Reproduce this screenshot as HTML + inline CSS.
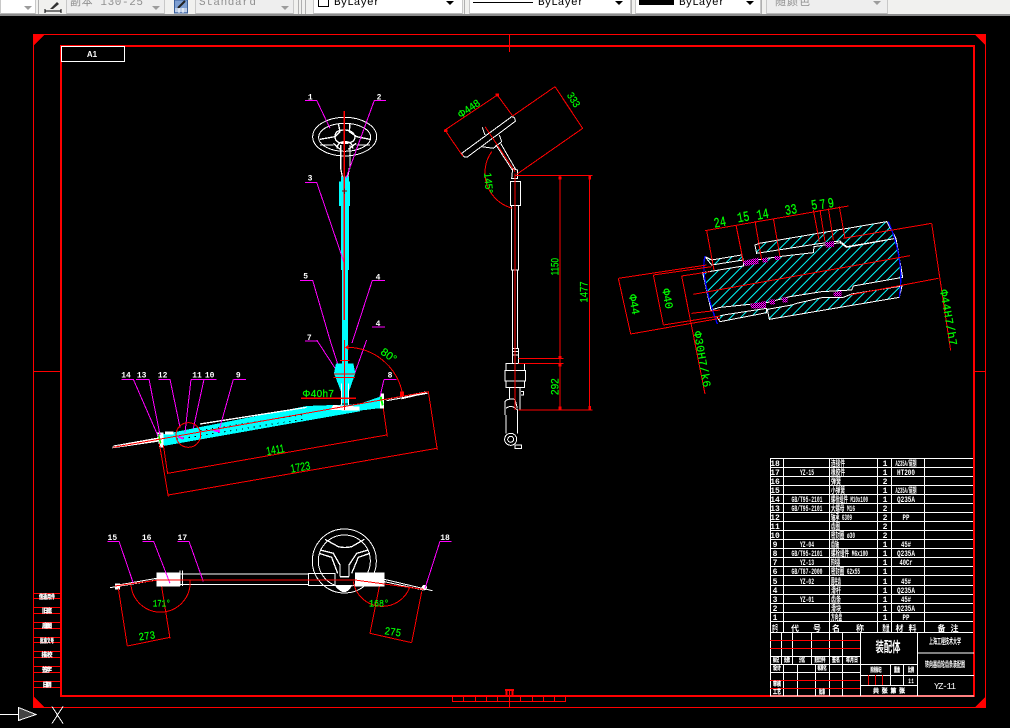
<!DOCTYPE html>
<html><head><meta charset="utf-8">
<style>
html,body{margin:0;padding:0;background:#000;width:1010px;height:728px;overflow:hidden}
#tb{position:absolute;left:0;top:0;width:1010px;height:14px;background:#f1f1ef;border-bottom:2px solid #8c8c8c;overflow:hidden}
.c{position:absolute;top:-4px;height:16px;background:#fff;border:1px solid #c8c8c8;border-bottom:2px solid #b8b8b8;box-sizing:content-box;font:11px/14px "Liberation Mono","Noto Sans CJK SC",monospace;color:#000;white-space:pre}
.d{background:#eeeeee;color:#8f8f8f}
.c span{position:absolute;top:-1px}
.a{position:absolute;top:6px;width:0;height:0;border-left:4px solid transparent;border-right:4px solid transparent;border-top:4px solid #000}
.g{border-top-color:#9c9c9c}
.s{position:absolute;top:0;width:1px;height:14px;background:#b0b0b0}
svg{position:absolute;left:0;top:0}
text{font-family:"Liberation Mono","Noto Sans CJK SC",monospace}
.w{fill:none;stroke:#fff;stroke-width:3}
.r{fill:none;stroke:#f00;stroke-width:3}
.m{fill:none;stroke:#f0f;stroke-width:3}
.gt{fill:#0f0;stroke:#0f0;stroke-width:.6;font-size:33px;font-family:"Liberation Sans",sans-serif;text-anchor:middle}
.wt{fill:#fff;font-size:24px;font-weight:bold;font-family:"Liberation Sans",sans-serif;text-anchor:middle}
.t{fill:#fff;font-size:8px;font-weight:bold;text-anchor:middle;font-family:"Liberation Sans","Noto Sans CJK SC",sans-serif}
.n{text-anchor:start}
.b{fill:#fff;stroke:#fff;stroke-width:.3;font-size:6px;font-weight:bold;text-anchor:middle;font-family:"Liberation Sans","Noto Sans CJK SC",sans-serif}
</style></head><body>
<svg width="1010" height="728" viewBox="0 0 1010 728" shape-rendering="crispEdges">
<defs>
<pattern id="h" width="21" height="21" patternUnits="userSpaceOnUse" patternTransform="rotate(-45)"><rect width="21" height="21" fill="#000"/><rect width="21" height="3" fill="#0ff"/></pattern>
<pattern id="k" width="6" height="6" patternUnits="userSpaceOnUse"><rect width="6" height="6" fill="#f0f"/><rect width="3" height="3" fill="#000"/><rect x="3" y="3" width="3" height="3" fill="#600060"/></pattern>
</defs>
<!-- frame -->
<g fill="#f00">
<rect x="33" y="34" width="953" height="1"/><rect x="33" y="707" width="953" height="1"/><rect x="33" y="34" width="1" height="674"/><rect x="985" y="34" width="1" height="674"/>
</g>
<g fill="none" stroke="#f00">
<rect x="61" y="46" width="913" height="650" stroke-width="2"/>
<path d="M509.500 34V52M509.500 690V707M33 371.500H61M974 371.500H986"/>
<path d="M452.500 696V701.500H565.500V696M463.500 697V701M475.500 697V701M486.500 697V701M497.500 697V701M509.500 697V701M520.500 697V701M532.500 697V701M543.500 697V701M554.500 697V701"/>
<path d="M505 690H514M506.500 691V697M512.500 691V697" stroke-width="2"/>
</g>
<g fill="#f00"><path d="M33 34H45L33 46ZM986 34V46L974 34ZM33 708V696L45 708ZM986 708H974L986 696Z"/></g>
<rect x="61.500" y="46.500" width="63" height="15" fill="#000" stroke="#fff"/>
<text x="92" y="57" fill="#fff" font-size="8" font-weight="bold" text-anchor="middle" style="font-family:'Liberation Sans',sans-serif">A1</text>

<!-- left strip -->
<g fill="none" stroke="#f00"><path d="M33 593.500H61M33 598.500H61M33 607.500H61M33 613.500H61M33 622.500H61M33 628.500H61M33 637.500H61M33 642.500H61M33 651.500H61M33 657.500H61M33 666.500H61M33 672.500H61M33 681.500H61M33 687.500H61"/></g>
<g class="b">
<text x="47" y="599" textLength="16" lengthAdjust="spacingAndGlyphs">借通用件</text>
<text x="47" y="613" textLength="10" lengthAdjust="spacing">旧底</text>
<text x="47" y="628" textLength="10" lengthAdjust="spacing">底图</text>
<text x="47" y="643" textLength="14" lengthAdjust="spacingAndGlyphs">批准文号</text>
<text x="47" y="657" textLength="11" lengthAdjust="spacingAndGlyphs">描校</text>
<text x="47" y="672" textLength="10" lengthAdjust="spacing">签字</text>
<text x="47" y="687" textLength="9" lengthAdjust="spacing">日期</text>
</g>

<!-- UCS -->
<g fill="none" stroke="#fff"><path d="M0 714.500H18"/><path d="M18.500 707.500L36 714.500L18.500 720.500Z" fill="#444"/><path d="M52 706.500L63 723.500M63 706.500L52 723.500"/></g>

<g>
<!-- upper main column -->
<g transform="translate(100,80) scale(.33333)">
<path fill="#0ff" d="M723 290H747V305H750V378H747V570H744V860H726V570H723V378H717V305H723Z"/>
<ellipse class="w" cx="734" cy="170" rx="96" ry="58"/>
<ellipse class="w" cx="734" cy="172" rx="78" ry="42"/>
<g class="w" style="stroke-width:4"><path d="M715 130L720 155L705 170L660 178M750 130L748 155L770 170L810 178M705 170Q705 190 733 190Q765 190 765 170Q760 150 733 150Q705 150 705 170ZM712 205Q712 185 735 185Q758 185 758 205M700 190L720 208M768 190L745 208M722 195V265M750 195V265M722 265L727 290M748 265L743 290"/><path d="M660 195L700 195M770 195L810 195"/></g>
<path class="m" d="M615 61H650L690 145M858 61H823L738 295M615 307H650L733 550M600 601H638L690 780M855 601H817L756 789M615 783H654M816 741H855"/>
<path class="r" style="stroke-width:4" d="M733 93V720"/>
<path d="M726 333H741M733 325V342" stroke="#800" stroke-width="3"/>
<g class="wt"><text x="631" y="58">1</text><text x="837" y="58">2</text><text x="630" y="301">3</text><text x="617" y="596">5</text><text x="834" y="598">4</text><text x="834" y="738">4</text><text x="628" y="780">7</text></g>
</g>
<!-- rack -->
<g transform="translate(100,340) scale(.33333)">
<path class="m" d="M650 0L712 95M690 0L722 100M800 0L750 140"/>
<path fill="#0ff" d="M726 0H744V70H760L766 100L745 160V190H725V160L702 100L708 70H726Z"/>
<path fill="#0ff" d="M190 283L620 198L780 192V214L620 242L190 318Z"/>
<path fill="#fff" d="M700 195L780 200V212L690 210Z"/>
<path fill="#0ff" d="M778 192L840 170H848V205H835L778 212Z"/>
<path d="M230 298L620 236M300 272L620 222" fill="none" stroke="#000" stroke-width="3" stroke-dasharray="4 14"/>
<path d="M300 252L620 202" fill="none" stroke="#fff" stroke-width="4"/>
<path class="w" d="M38 322L175 296M40 318L175 294M848 180L982 155M860 182L982 160M725 130V195M745 130V195"/>
<path fill="#fff" d="M170 278L190 278V322H178ZM840 160H852V205H840ZM195 275H220V284H195ZM38 320L175 298V305L38 325ZM905 172L980 156V160L905 178Z"/>
<path d="M842 170L848 196" stroke="#0f0" stroke-width="6"/><path d="M175 282L182 310" stroke="#0f0" stroke-width="5"/>
<path class="m" d="M65 118H100L175 290M108 118H147L180 285M175 118H210L240 262M273 118H312M273 118L255 278M312 118H350M312 118L280 265M400 118H438M400 118L357 272M852 118H890M852 118L840 170"/>
<path d="M235 290L250 296M340 270L360 275" stroke="#f0f" stroke-width="6"/>
<circle class="r" cx="265" cy="285" r="37"/>
<path class="r" d="M40 322L985 155M733 0V210M702 102H765M700 112H765M720 62H748"/>
<path class="r" style="stroke-width:4" d="M603 175H768"/>
<path class="r" d="M745 22A170 170 0 0 1 908 165M190 315L203 402M203 400L860 285M850 205L862 290M178 310L205 470M205 465L1010 325M985 155L1012 330"/>
<path fill="#f00" d="M745 15L735 22L745 30ZM900 155H912V168H900Z"/>
<text class="gt" transform="translate(528,341) rotate(-10)" style="font-size:35px" textLength="55" lengthAdjust="spacingAndGlyphs">1411</text>
<text class="gt" transform="translate(603,393) rotate(-10)" style="font-size:35px" textLength="60" lengthAdjust="spacingAndGlyphs">1723</text>
<text class="gt" transform="translate(860,55) rotate(35)" textLength="50" lengthAdjust="spacingAndGlyphs">80°</text>
<text class="gt" x="655" y="171" style="font-size:30px;letter-spacing:1px">Φ40h7</text>
<g class="wt"><text x="78" y="112">14</text><text x="125" y="112">13</text><text x="188" y="112">12</text><text x="291" y="112">11</text><text x="329" y="112">10</text><text x="415" y="112">9</text><text x="870" y="112">8</text></g>
</g>

<!-- side view -->
<g transform="translate(440,80) scale(.33333)">
<path class="w" d="M65 220L215 110Q226 110 226 124L82 231Q70 234 65 220Z"/>
<path class="w" d="M127 142L135 165M125 200L160 205L185 185L178 165M168 195L218 272M182 190L228 270"/>
<path class="w" d="M212 305H242V377H212ZM215 377V570H236V377M218 570V805M233 570V805M218 805H236V850H218ZM218 815H236M218 825H236M198 850H254V872H198ZM195 872H257V903H195ZM198 903H254V922H198ZM208 922V958M240 922V990M243 935H250V945H243M195 965Q200 955 225 958L232 985M195 965V1005M198 985Q215 972 232 990V1060M198 1005V1060"/>
<circle class="w" cx="212" cy="1078" r="18"/><circle class="w" cx="212" cy="1078" r="9"/>
<path class="w" d="M225 1095H245V1105H225ZM218 265L232 270V295H215Z"/>
<path class="r" d="M225 280V990M135 140L225 275"/>
<path class="r" d="M225 286H458M235 835H370M235 850H370M235 990H458M360 286V990M449 286V990M15 150L172 45M15 150L68 228M172 45L218 108M218 108L345 20M345 20L428 145M428 145L230 283M155 215A110 110 0 0 0 218 385"/>
<path fill="#f00" d="M12 148H22V156H12ZM167 40H177V50H167ZM356 290H364V298H356ZM356 828H364V835H356ZM356 852H364V860H356ZM356 980H364V990H356ZM445 288H453V298H445ZM445 978H453V990H445Z"/>
<text class="gt" transform="translate(92,95) rotate(-34)" style="font-size:31px" textLength="74" lengthAdjust="spacingAndGlyphs">Φ448</text>
<text class="gt" transform="translate(392,65) rotate(58)" style="font-size:31px" textLength="46" lengthAdjust="spacingAndGlyphs">333</text>
<text class="gt" transform="translate(135,310) rotate(85)" style="font-size:31px" textLength="62" lengthAdjust="spacingAndGlyphs">145°</text>
<text class="gt" transform="translate(355,560) rotate(-90)" textLength="52" lengthAdjust="spacingAndGlyphs">1150</text>
<text class="gt" transform="translate(443,636) rotate(-90)" textLength="63" lengthAdjust="spacingAndGlyphs">1477</text>
<text class="gt" transform="translate(355,920) rotate(-90)" textLength="50" lengthAdjust="spacingAndGlyphs">292</text>
</g>

<!-- section -->
<g transform="translate(610,190) scale(.33333)">
<path fill="url(#h)" stroke="#fff" stroke-width="3" d="M278 248L400 228V215L440 210L505 200L610 188L612 170L690 158L710 172L858 145L878 262L730 288L725 300L635 305L540 320L470 338L330 352L303 360Z"/>
<path fill="url(#h)" stroke="#fff" stroke-width="3" d="M448 160L830 95L858 145L710 170L690 153L620 162L505 180L440 190L435 165Z"/>
<path fill="url(#h)" stroke="#fff" stroke-width="3" d="M472 358L478 388L868 322L876 288L725 312L700 322L640 322L560 340L545 345Z"/>
<path fill="url(#h)" stroke="#fff" stroke-width="3" d="M285 200L305 210L395 195L400 210L305 225ZM320 380L340 375L470 355V368L330 395Z"/>
<path fill="url(#k)" d="M398 213L445 203V222L405 228ZM455 205L472 202V218H458ZM492 198H510V210H495ZM645 157L672 153V170L648 173ZM420 342L468 333V354L425 356ZM478 328H495V343H480ZM515 322H532V337H518ZM670 307L695 303V320H672Z"/>
<path d="M285 198Q270 260 322 402M835 95Q885 210 868 322" fill="none" stroke="#00f" stroke-width="4"/>
<path class="r" d="M250 313L900 197M285 122L715 48M290 122L312 240M378 105L400 215M435 93L455 210M490 85L510 200M610 60L628 155M630 60L645 155M655 55L670 150M688 50L705 145M700 145L965 100M965 100L1022 482M720 315L985 265M25 265L290 225M25 265L62 432M62 432L330 385M130 255L305 230M130 255L160 405M160 405L330 378M215 258L300 245M215 258L285 612M245 370L330 360"/>
<g class="gt"><text transform="translate(332,110) rotate(-10) scale(.9,1.25)" style="font-size:34px">24</text><text transform="translate(402,94) rotate(-10) scale(.9,1.25)" style="font-size:34px">15</text><text transform="translate(460,86) rotate(-10) scale(.9,1.25)" style="font-size:34px">14</text><text transform="translate(545,72) rotate(-10) scale(.9,1.25)" style="font-size:34px">33</text><text transform="translate(615,58) rotate(-10) scale(.9,1.25)" style="font-size:34px">5</text><text transform="translate(640,56) rotate(-10) scale(.9,1.25)" style="font-size:34px">7</text><text transform="translate(665,52) rotate(-10) scale(.9,1.25)" style="font-size:34px">9</text>
<text transform="translate(62,345) rotate(80)" style="font-size:34px">Φ44</text><text transform="translate(162,328) rotate(80)" style="font-size:34px">Φ40</text><text transform="translate(266,510) rotate(80)" style="font-size:34px;letter-spacing:1px">Φ30H7/k6</text><text transform="translate(1005,385) rotate(80)" style="font-size:34px;letter-spacing:1px">Φ44H7/h7</text></g>
</g>

<!-- bottom view -->
<g transform="translate(95,520) scale(.33333)">
<circle class="w" cx="748" cy="123" r="96"/><circle class="w" cx="748" cy="123" r="78"/>
<path class="w" style="stroke-width:4" d="M690 58L730 80Q750 85 770 80L808 58M675 90L715 100L735 135L735 170M820 90L785 100L762 135L762 170M672 100L710 112L728 160M825 100L790 112L770 160M735 170H762"/>
<path class="w" d="M255 162H640V193H255ZM640 160H720V197H640ZM255 152V198M262 152V198M720 195Q750 235 770 195M735 205Q750 222 762 205"/>
<path fill="#fff" d="M185 158H255V200H185ZM780 157H868V200H780ZM720 195H770L760 212H735ZM60 190H75V208H60Z"/>
<path class="w" d="M45 203L185 180M70 195L185 175M868 178L1012 212M868 185L985 210"/>
<circle cx="988" cy="203" r="8" fill="#fff"/>
<path class="m" d="M37 64H72L115 190M142 64H176L225 190M247 64H282L325 185M1070 64H1035L990 205"/>
<path class="r" d="M60 198L190 180H780L985 208M108 195A88 88 0 0 0 285 180M775 185A88 88 0 0 0 945 200M70 205L97 378M97 378L225 352M200 200L225 355M853 200L825 340M825 340L950 368M980 215L950 368"/>
<g class="gt"><text transform="translate(157,358) rotate(-8)" style="font-size:33px" textLength="50" lengthAdjust="spacingAndGlyphs">273</text><text transform="translate(892,346) rotate(8)" style="font-size:33px" textLength="50" lengthAdjust="spacingAndGlyphs">275</text><text x="200" y="259" style="font-size:30px" textLength="53" lengthAdjust="spacingAndGlyphs">171°</text><text x="852" y="259" style="font-size:30px" textLength="60" lengthAdjust="spacingAndGlyphs">168°</text></g>
<g class="wt"><text x="52" y="60">15</text><text x="155" y="60">16</text><text x="262" y="60">17</text><text x="1050" y="60">18</text></g>
</g>
</g>

<!-- parts table -->
<g stroke="#fff" fill="none">
<path d="M770.500 458.500H973M770.500 467.500H973M770.500 476.500H973M770.500 485.500H973M770.500 494.500H973M770.500 503.500H973M770.500 512.500H973M770.500 521.500H973M770.500 530.500H973M770.500 539.500H973M770.500 548.500H973M770.500 557.500H973M770.500 566.500H973M770.500 575.500H973M770.500 585.500H973M770.500 594.500H973M770.500 603.500H973M770.500 612.500H973M770.500 621.500H973M770.500 632.500H973"/>
<path d="M770.500 458V696M783.500 458V632M829.500 458V632M877.500 458V632M891.500 458V632M924.500 458V632"/>
<!-- title -->
<path d="M770 696H974M860.500 632V696M917.500 632V696M770 656.500H860M770 664.500H860M770 672.500H860"/>
<path d="M781.500 632V664M792.500 632V664M811.500 632V664M829.500 632V664M842.500 632V696M783.500 664V696M797.500 664V696M815.500 664V696M829.500 664V696M860 664.500H917M860 675.500H917M860 685.500H917M890.500 664V685M903.500 664V685M917 653H974M917 675.500H974"/>
</g>
<g stroke="#f00" fill="none"><path d="M770 640.500H860M770 648.500H860M770 680.500H860M770 688.500H860M868.500 675V685M875.500 675V685M882.500 675V685"/></g>
<g class="t">
<text x="775" y="466">18</text><text class="n" x="831" y="466" textLength="14" lengthAdjust="spacingAndGlyphs">连接件</text><text x="885" y="466">1</text><text x="906" y="466" textLength="21" lengthAdjust="spacingAndGlyphs">A235A/碳钢</text>
<text x="775" y="475">17</text><text x="807" y="475" textLength="14" lengthAdjust="spacingAndGlyphs">YZ-15</text><text class="n" x="831" y="475" textLength="14" lengthAdjust="spacingAndGlyphs">橡胶件</text><text x="885" y="475">1</text><text x="906" y="475" textLength="18" lengthAdjust="spacingAndGlyphs">HT200</text>
<text x="775" y="484">16</text><text class="n" x="831" y="484" textLength="10" lengthAdjust="spacingAndGlyphs">弹簧</text><text x="885" y="484">2</text>
<text x="775" y="493">15</text><text class="n" x="831" y="493" textLength="14" lengthAdjust="spacingAndGlyphs">小弹簧</text><text x="885" y="493">1</text><text x="906" y="493" textLength="21" lengthAdjust="spacingAndGlyphs">A235A/碳钢</text>
<text x="775" y="502">14</text><text x="807" y="502" textLength="31" lengthAdjust="spacingAndGlyphs">GB/T95-2101</text><text class="n" x="831" y="502" textLength="37" lengthAdjust="spacingAndGlyphs">螺栓组件 M10x100</text><text x="885" y="502">1</text><text x="906" y="502" textLength="18" lengthAdjust="spacingAndGlyphs">Q235A</text>
<text x="775" y="511">13</text><text x="807" y="511" textLength="31" lengthAdjust="spacingAndGlyphs">GB/T95-2101</text><text class="n" x="831" y="511" textLength="24" lengthAdjust="spacingAndGlyphs">大螺母 M16</text><text x="885" y="511">2</text>
<text x="775" y="520">12</text><text class="n" x="831" y="520" textLength="21" lengthAdjust="spacingAndGlyphs">轴承 6309</text><text x="885" y="520">2</text><text x="906" y="520" textLength="7" lengthAdjust="spacingAndGlyphs">PP</text>
<text x="775" y="529">11</text><text class="n" x="831" y="529" textLength="9" lengthAdjust="spacingAndGlyphs">齿圈</text><text x="885" y="529">2</text>
<text x="775" y="538">10</text><text class="n" x="831" y="538" textLength="24" lengthAdjust="spacingAndGlyphs">密封圈 ø30</text><text x="885" y="538">2</text>
<text x="775" y="547">9</text><text x="807" y="547" textLength="14" lengthAdjust="spacingAndGlyphs">YZ-04</text><text class="n" x="831" y="547" textLength="8" lengthAdjust="spacingAndGlyphs">齿轴</text><text x="885" y="547">1</text><text x="906" y="547" textLength="10" lengthAdjust="spacingAndGlyphs">45#</text>
<text x="775" y="556">8</text><text x="807" y="556" textLength="31" lengthAdjust="spacingAndGlyphs">GB/T95-2101</text><text class="n" x="831" y="556" textLength="37" lengthAdjust="spacingAndGlyphs">螺栓组件 M6x100</text><text x="885" y="556">1</text><text x="906" y="556" textLength="18" lengthAdjust="spacingAndGlyphs">Q235A</text>
<text x="775" y="565">7</text><text x="807" y="565" textLength="14" lengthAdjust="spacingAndGlyphs">YZ-13</text><text class="n" x="831" y="565" textLength="9" lengthAdjust="spacingAndGlyphs">转向器</text><text x="885" y="565">1</text><text x="906" y="565" textLength="13" lengthAdjust="spacingAndGlyphs">40Cr</text>
<text x="775" y="574">6</text><text x="807" y="574" textLength="31" lengthAdjust="spacingAndGlyphs">GB/T87-2000</text><text class="n" x="831" y="574" textLength="29" lengthAdjust="spacingAndGlyphs">密封圈 62x55</text><text x="885" y="574">1</text>
<text x="775" y="584">5</text><text x="807" y="584" textLength="14" lengthAdjust="spacingAndGlyphs">YZ-02</text><text class="n" x="831" y="584" textLength="10" lengthAdjust="spacingAndGlyphs">圆柱齿</text><text x="885" y="584">1</text><text x="906" y="584" textLength="10" lengthAdjust="spacingAndGlyphs">45#</text>
<text x="775" y="593">4</text><text class="n" x="831" y="593" textLength="10" lengthAdjust="spacingAndGlyphs">滑杆</text><text x="885" y="593">1</text><text x="906" y="593" textLength="18" lengthAdjust="spacingAndGlyphs">Q235A</text>
<text x="775" y="602">3</text><text x="807" y="602" textLength="14" lengthAdjust="spacingAndGlyphs">YZ-01</text><text class="n" x="831" y="602" textLength="10" lengthAdjust="spacingAndGlyphs">齿条</text><text x="885" y="602">1</text><text x="906" y="602" textLength="10" lengthAdjust="spacingAndGlyphs">45#</text>
<text x="775" y="611">2</text><text class="n" x="831" y="611" textLength="10" lengthAdjust="spacingAndGlyphs">滑块</text><text x="885" y="611">1</text><text x="906" y="611" textLength="18" lengthAdjust="spacingAndGlyphs">Q235A</text>
<text x="775" y="620">1</text><text class="n" x="831" y="620" textLength="11" lengthAdjust="spacingAndGlyphs">方向盘</text><text x="885" y="620">1</text><text x="906" y="620" textLength="7" lengthAdjust="spacingAndGlyphs">PP</text>
<text x="775" y="631" textLength="6" lengthAdjust="spacingAndGlyphs">序号</text><text x="806" y="631" textLength="30" lengthAdjust="spacing">代号</text><text x="848" y="631" textLength="32" lengthAdjust="spacing">名称</text><text x="886" y="631" textLength="7" lengthAdjust="spacingAndGlyphs">数量</text><text x="906" y="631" textLength="21" lengthAdjust="spacing">材料</text><text x="948" y="631" textLength="21" lengthAdjust="spacing">备注</text>
<text x="888" y="652" style="font-size:14px" textLength="25" lengthAdjust="spacingAndGlyphs">装配体</text>
<text x="945" y="644" textLength="32" lengthAdjust="spacingAndGlyphs">上海工程技术大学</text>
<text x="945" y="667" textLength="40" lengthAdjust="spacingAndGlyphs">转向器齿轮齿条装配图</text>
<text x="945" y="689" style="font-size:9px;font-weight:normal" textLength="22" lengthAdjust="spacing">YZ-11</text>
</g>
<g class="b">
<text x="876" y="672" textLength="11" lengthAdjust="spacingAndGlyphs">阶段标记</text><text x="897" y="672" textLength="6" lengthAdjust="spacingAndGlyphs">重量</text><text x="911" y="672" textLength="6" lengthAdjust="spacingAndGlyphs">比例</text><text x="911" y="683" textLength="5" lengthAdjust="spacingAndGlyphs">1:1</text>
<text x="889" y="693" textLength="32" lengthAdjust="spacing">共张第张</text>
<text x="776" y="662" textLength="6" lengthAdjust="spacingAndGlyphs">标记</text><text x="787" y="662" textLength="6" lengthAdjust="spacingAndGlyphs">处数</text><text x="802" y="662" textLength="6" lengthAdjust="spacingAndGlyphs">分区</text><text x="820" y="662" textLength="11" lengthAdjust="spacingAndGlyphs">更改文件号</text><text x="836" y="662" textLength="8" lengthAdjust="spacingAndGlyphs">签名</text><text x="852" y="662" textLength="12" lengthAdjust="spacingAndGlyphs">年月日</text>
<text x="777" y="670" textLength="8" lengthAdjust="spacingAndGlyphs">设计</text><text x="822" y="670" textLength="9" lengthAdjust="spacingAndGlyphs">标准化</text><text x="777" y="686" textLength="8" lengthAdjust="spacingAndGlyphs">审核</text><text x="777" y="694" textLength="8" lengthAdjust="spacingAndGlyphs">工艺</text><text x="822" y="694" textLength="6" lengthAdjust="spacingAndGlyphs">批准</text>
</g>
</svg>

<div id="tb">
<div class="c" style="left:0;width:34px"></div><div class="a g" style="left:24px"></div>
<div class="s" style="left:38px"></div>
<svg width="20" height="14" style="left:44px"><path d="M1 9V13M17 9V13M1 11H17" stroke="#000" fill="none"/><path d="M6 9L13 2L15 4L9 9Z" fill="#333"/></svg>
<div class="c d" style="left:66px;width:97px"><span style="left:3px;letter-spacing:.6px">副本 130-25</span></div><div class="a g" style="left:152px"></div>
<svg width="16" height="14" style="left:174px"><rect x="0.500" y="0" width="13" height="13" fill="#7d9ed1" stroke="#3a5f9a"/><path d="M4 8L11 1" stroke="#222" stroke-width="2"/><path d="M1 9H13M1 11H13M5 8V13M9 8V13" stroke="#fff"/></svg>
<div class="c d" style="left:195px;width:97px"><span style="left:3px;letter-spacing:.6px">Standard</span></div><div class="a g" style="left:281px"></div>
<div class="s" style="left:298px"></div><div class="s" style="left:301px"></div><div class="s" style="left:305px"></div>
<div class="c" style="left:313px;width:148px"><span style="left:20px">ByLayer</span></div>
<div style="position:absolute;left:318px;top:0;width:9px;height:6px;border:1px solid #000;border-top:0;background:#fff"></div>
<div class="a" style="left:446px;top:1px"></div>
<div class="s" style="left:464px"></div>
<div class="c" style="left:469px;width:160px"><span style="left:68px">ByLayer</span></div>
<div style="position:absolute;left:473px;top:2px;width:60px;height:1px;background:#000"></div>
<div class="a" style="left:615px;top:1px"></div>
<div class="s" style="left:631px"></div>
<div class="c" style="left:635px;width:124px"><span style="left:43px">ByLayer</span></div>
<div style="position:absolute;left:639px;top:0;width:35px;height:5px;background:#000"></div>
<div class="a" style="left:746px;top:1px"></div>
<div class="s" style="left:761px"></div>
<div class="c d" style="left:766px;width:120px"><span style="left:8px;letter-spacing:1px">随颜色</span></div><div class="a g" style="left:873px;top:1px"></div>
</div>
</body></html>
